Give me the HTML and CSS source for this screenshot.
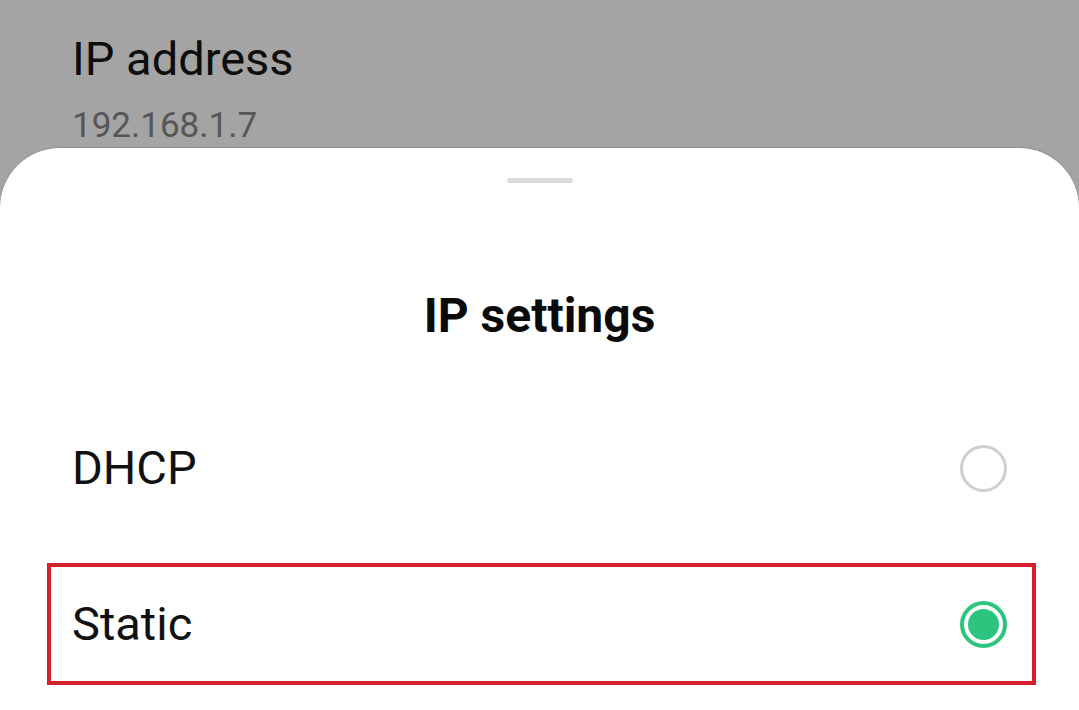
FILE: index.html
```html
<!DOCTYPE html>
<html lang="en">
<head>
<meta charset="utf-8">
<title>IP settings</title>
<link rel="stylesheet" href="styles.css">
</head>
<body>
<div class="screen">
  <section class="behind">
    <div class="behind-title">IP address</div>
    <div class="behind-value">192.168.1.7</div>
  </section>
  <section class="sheet">
    <div class="handle"></div>
    <h1 class="sheet-title">IP settings</h1>
    <div class="options">
      <div class="option">
        <span class="option-label">DHCP</span>
        <span class="radio"></span>
      </div>
      <div class="option option-highlight">
        <span class="option-label">Static</span>
        <span class="radio radio-checked"><span class="radio-dot"></span></span>
      </div>
    </div>
  </section>
</div>
</body>
</html>
```

FILE: styles.css
```css
* { box-sizing: border-box; }

html, body {
  margin: 0;
  padding: 0;
  height: 100%;
}

body {
  background: #a4a4a4;
  font-family: Roboto, "Noto Sans", Arial, sans-serif;
  color: #111;
  overflow: hidden;
}

.screen {
  display: flex;
  flex-direction: column;
  height: 710px;
}

.behind {
  height: 148px;
  padding: 31px 0 0 72px;
  flex: none;
}

.behind-title {
  font-size: 47px;
  line-height: 56px;
  color: #0d0d0d;
}

.behind-value {
  margin-top: 18px;
  font-size: 35px;
  line-height: 42px;
  color: #565656;
}

.sheet {
  flex: 1;
  background: #fff;
  border-radius: 60px 60px 0 0;
  box-shadow: 0 -1px 1px rgba(0, 0, 0, 0.12);
  display: flex;
  flex-direction: column;
  align-items: stretch;
}

.handle {
  align-self: center;
  width: 66px;
  height: 5px;
  margin-top: 30px;
  border-radius: 3px;
  background: #dcdcdc;
}

.sheet-title {
  margin: 105px 0 0;
  text-align: center;
  font-size: 48px;
  line-height: 56px;
  font-weight: 700;
  color: #0a0a0a;
}

.options {
  margin-top: 63px;
  padding: 0 43px 0 47px;
  display: flex;
  flex-direction: column;
  gap: 34px;
}

.option {
  height: 122px;
  border: 4px solid transparent;
  padding: 0 25px 0 21px;
  display: flex;
  align-items: center;
  justify-content: space-between;
}

.option-highlight {
  border-color: #d61f2c;
}

.option-label {
  font-size: 47px;
  line-height: 56px;
  color: #111;
}

.radio {
  width: 47px;
  height: 47px;
  border-radius: 50%;
  border: 3px solid #cfcfcf;
  display: flex;
  align-items: center;
  justify-content: center;
  flex: none;
}

.radio-checked {
  border: 4px solid #2dc47f;
}

.radio-dot {
  width: 31px;
  height: 31px;
  border-radius: 50%;
  background: #2dc47f;
}
```
